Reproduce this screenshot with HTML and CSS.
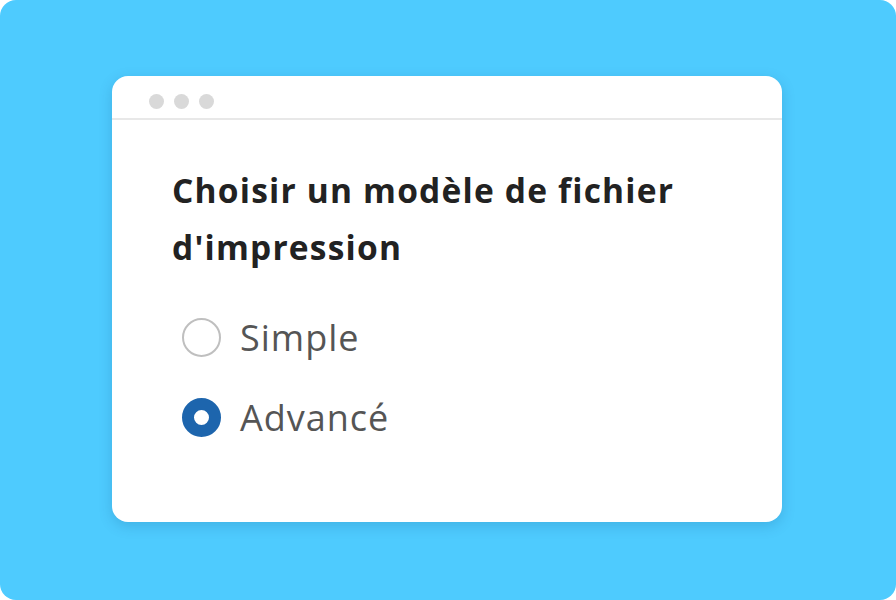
FILE: index.html
```html
<!DOCTYPE html>
<html lang="fr">
<head>
<meta charset="utf-8">
<link rel="stylesheet" href="styles.css">
</head>
<body>
<div class="page">
  <div class="card">
    <div class="card-header">
      <span class="dot"></span><span class="dot"></span><span class="dot"></span>
    </div>
    <div class="card-body">
      <h1 class="title">Choisir un modèle de fichier d'impression</h1>
      <div class="options">
        <div class="option">
          <span class="radio"></span>
          <span class="label">Simple</span>
        </div>
        <div class="option">
          <span class="radio radio-checked"></span>
          <span class="label">Advancé</span>
        </div>
      </div>
    </div>
  </div>
</div>
</body>
</html>
```
FILE: styles.css
```css
html, body {
  margin: 0;
  padding: 0;
  background: #ffffff;
}
.page {
  width: 896px;
  height: 600px;
  box-sizing: border-box;
  background: #4ecbfe;
  border-radius: 16px;
  padding: 76px 114px 78px 112px;
  font-family: "Open Sans", "Liberation Sans", sans-serif;
}
.card {
  height: 100%;
  background: #ffffff;
  border-radius: 16px;
  box-shadow: 0 4px 14px rgba(0, 60, 110, 0.18);
  display: flex;
  flex-direction: column;
}
.card-header {
  height: 44px;
  box-sizing: border-box;
  border-bottom: 2px solid #e8e8e8;
  display: flex;
  align-items: center;
  gap: 10px;
  padding-left: 37px;
  padding-top: 8px;
}
.dot {
  width: 15px;
  height: 15px;
  border-radius: 50%;
  background: #d9d9d9;
}
.card-body {
  padding: 42px 60px 0 60px;
}
.title {
  margin: 0;
  font-size: 33.5px;
  font-weight: 700;
  letter-spacing: 1.2px;
  line-height: 57px;
  color: #222222;
}
.options {
  margin-top: 42px;
  display: flex;
  flex-direction: column;
  gap: 41px;
}
.option {
  display: flex;
  align-items: center;
  gap: 19px;
  padding-left: 10px;
}
.radio {
  flex: none;
  width: 39px;
  height: 39px;
  box-sizing: border-box;
  border-radius: 50%;
  border: 2px solid #bfbfbf;
  background: #ffffff;
}
.radio-checked {
  border: 12px solid #1d65ad;
}
.label {
  font-size: 36px;
  letter-spacing: 1px;
  line-height: 39px;
  color: #555555;
}
```
